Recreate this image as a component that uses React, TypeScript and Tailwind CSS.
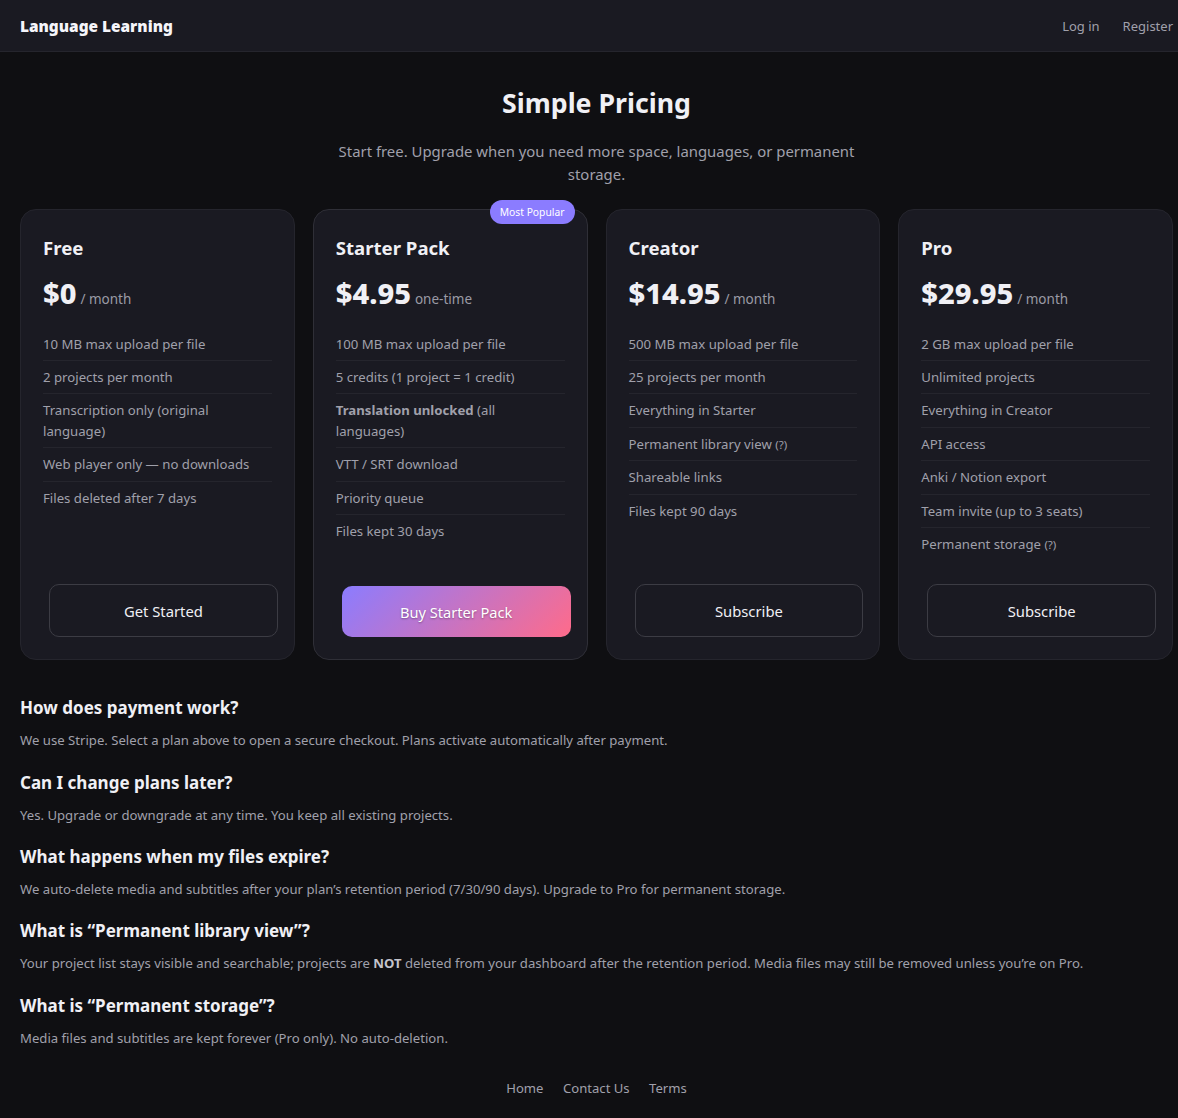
import type { ReactNode } from 'react'

type Plan = {
  name: string
  price: string
  period: string
  features: ReactNode[]
  cta: string
  popular?: boolean
}

const Hint = () => <span className="text-[11.5px] leading-none">(?)</span>

const PLANS: Plan[] = [
  {
    name: 'Free',
    price: '$0',
    period: '/ month',
    features: [
      '10 MB max upload per file',
      '2 projects per month',
      'Transcription only (original language)',
      'Web player only — no downloads',
      'Files deleted after 7 days',
    ],
    cta: 'Get Started',
  },
  {
    name: 'Starter Pack',
    price: '$4.95',
    period: 'one-time',
    popular: true,
    features: [
      '100 MB max upload per file',
      '5 credits (1 project = 1 credit)',
      <>
        <strong className="font-bold">Translation unlocked</strong> (all languages)
      </>,
      'VTT / SRT download',
      'Priority queue',
      'Files kept 30 days',
    ],
    cta: 'Buy Starter Pack',
  },
  {
    name: 'Creator',
    price: '$14.95',
    period: '/ month',
    features: [
      '500 MB max upload per file',
      '25 projects per month',
      'Everything in Starter',
      <>
        Permanent library view <Hint />
      </>,
      'Shareable links',
      'Files kept 90 days',
    ],
    cta: 'Subscribe',
  },
  {
    name: 'Pro',
    price: '$29.95',
    period: '/ month',
    features: [
      '2 GB max upload per file',
      'Unlimited projects',
      'Everything in Creator',
      'API access',
      'Anki / Notion export',
      'Team invite (up to 3 seats)',
      <>
        Permanent storage <Hint />
      </>,
    ],
    cta: 'Subscribe',
  },
]

const FAQ: { q: string; a: ReactNode }[] = [
  {
    q: 'How does payment work?',
    a: 'We use Stripe. Select a plan above to open a secure checkout. Plans activate automatically after payment.',
  },
  {
    q: 'Can I change plans later?',
    a: 'Yes. Upgrade or downgrade at any time. You keep all existing projects.',
  },
  {
    q: 'What happens when my files expire?',
    a: 'We auto-delete media and subtitles after your plan’s retention period (7/30/90 days). Upgrade to Pro for permanent storage.',
  },
  {
    q: 'What is “Permanent library view”?',
    a: (
      <>
        Your project list stays visible and searchable; projects are{' '}
        <strong className="font-bold text-[#c4c4cc]">NOT</strong> deleted from your dashboard after
        the retention period. Media files may still be removed unless you’re on Pro.
      </>
    ),
  },
  {
    q: 'What is “Permanent storage”?',
    a: 'Media files and subtitles are kept forever (Pro only). No auto-deletion.',
  },
]

function PlanCard({ plan }: { plan: Plan }) {
  return (
    <div
      className={`relative flex h-[451px] flex-col rounded-2xl border bg-[#1a1a22] pt-[23px] pr-[22px] pb-[22px] pl-[22px] ${
        plan.popular ? 'border-[#2f2f37]' : 'border-[#25252d]'
      }`}
    >
      {plan.popular ? (
        <span className="absolute -top-[10px] right-3 rounded-full bg-[#8b7cff] px-[10px] py-1 text-[10.3px] leading-[16px] text-white">
          Most Popular
        </span>
      ) : null}
      <h3 className="text-[18.6px] leading-[30px] font-bold text-[#f0f0f5]">{plan.name}</h3>
      <div className="mt-[8px] flex items-baseline gap-1 leading-[44px]">
        <span className="text-[29px] font-extrabold text-[#f0f0f5]">{plan.price}</span>
        <span className="text-[13.5px] text-[#9a9aa5]">{plan.period}</span>
      </div>
      <ul className="mt-[6.5px]">
        {plan.features.map((f, i) => (
          <li
            key={i}
            className="border-b border-[#25252d] py-[6px] text-[13.2px] leading-[20.4px] text-[#a0a0ab] last:border-b-0"
          >
            {f}
          </li>
        ))}
      </ul>
      {plan.popular ? (
        <button
          type="button"
          className="mt-auto ml-[6px] h-[51px] w-full shrink-0 rounded-[10px] bg-[linear-gradient(135deg,#8b7cff,#ff6b8a)] pt-[2px] text-[14.6px] text-white [text-shadow:0_1px_2px_rgba(0,0,0,0.35)]"
        >
          {plan.cta}
        </button>
      ) : (
        <button
          type="button"
          className="mt-auto ml-[6px] h-[53px] w-full shrink-0 rounded-[10px] border border-[#3c3c44] pt-[1px] text-[14.8px] text-[#f0f0f5]"
        >
          {plan.cta}
        </button>
      )}
    </div>
  )
}

export default function App() {
  return (
    <div className="min-h-[1118px] bg-[#0f0f12] font-['Noto_Sans',sans-serif]">
      <nav className="flex h-[52px] items-center justify-between border-b border-[#25252d] bg-[#1a1a22] pt-[2px] pr-[5px] pl-5">
        <span className="text-[15.4px] font-black text-[#f5f5fa]">Language Learning</span>
        <div className="flex gap-[23px] text-[13px] text-[#a0a0ab]">
          <a>Log in</a>
          <a>Register</a>
        </div>
      </nav>
      <main className="pr-[5px] pl-5">
        <h1 className="mt-[31px] text-center text-[26.7px] leading-[40px] font-bold text-[#f0f0f5]">
          Simple Pricing
        </h1>
        <p className="mx-auto mt-[17px] max-w-[540px] text-center text-[14.9px] leading-[23px] text-[#a0a0ab]">
          Start free. Upgrade when you need more space, languages, or permanent storage.
        </p>
        <div className="mt-[23px] grid grid-cols-4 gap-[18px]">
          {PLANS.map((p) => (
            <PlanCard key={p.name} plan={p} />
          ))}
        </div>
        <section className="mt-[34.2px]">
          {FAQ.map((f) => (
            <div key={f.q} className="mb-[18px]">
              <h4 className="text-[17px] leading-[27px] font-bold text-[#f0f0f5]">{f.q}</h4>
              <p className="mt-[9px] text-[13.15px] leading-[20.4px] text-[#a0a0ab]">{f.a}</p>
            </div>
          ))}
        </section>
        <footer className="mt-[31px] flex justify-center gap-[19.5px] text-[13.1px] text-[#a0a0ab]">
          <a>Home</a>
          <a>Contact Us</a>
          <a>Terms</a>
        </footer>
      </main>
    </div>
  )
}
